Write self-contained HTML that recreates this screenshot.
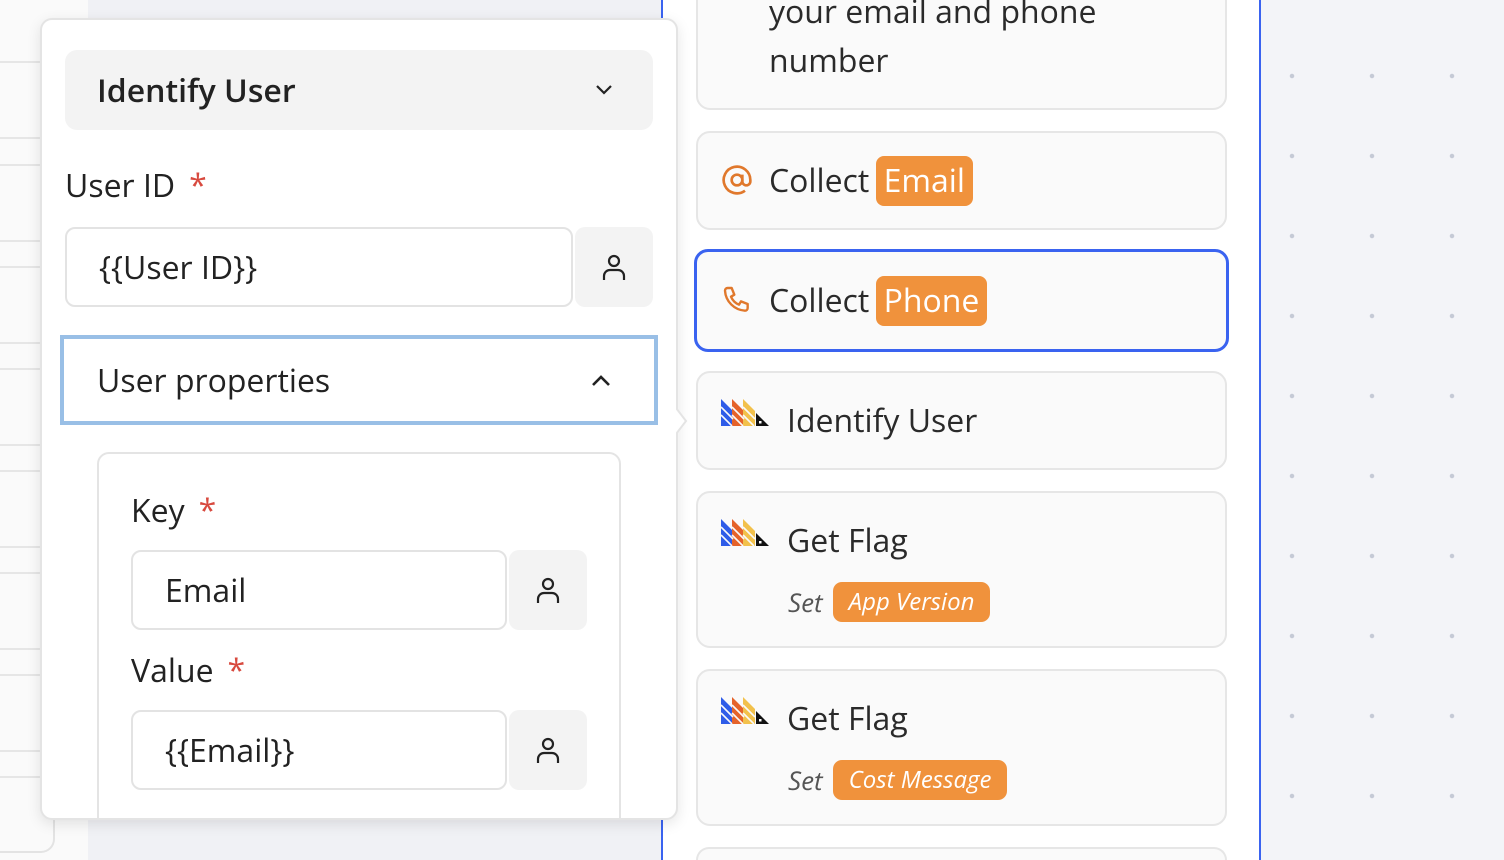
<!DOCTYPE html>
<html style="overflow:hidden;width:1504px;height:860px"><head><meta charset="utf-8"><style>
*{box-sizing:border-box;margin:0;padding:0}
body{width:1504px;height:860px;position:relative;overflow:hidden;background:#fff;font-family:"Open Sans","Liberation Sans",sans-serif;color:#222}
.abs{position:absolute}
.line{position:absolute;left:0;width:88px;height:2px;background:#e6e6e6}
.card{position:absolute;left:696px;width:531px;background:#fafafa;border:2px solid #e6e6e6;border-radius:14px}
.t{position:absolute;font-size:32px;color:#2a2a2a;white-space:nowrap}
.tag{display:inline-block;background:#f0923c;color:#fff;border-radius:8px;padding:0 8px;line-height:50px}
.inp{position:absolute;background:#fff;border:2px solid #e3e3e3;border-radius:10px;font-size:32px;color:#222;padding-left:32px;display:flex;align-items:center}
.btn{position:absolute;background:#f3f3f3;border-radius:10px;display:flex;align-items:center;justify-content:center}
.lbl{position:absolute;font-size:32px;color:#222}
.req{color:#d84a3f;margin-left:14px}
.set{position:absolute;font-size:26px;font-style:italic;color:#555;white-space:nowrap}
.set span{display:inline-block;background:#f0923c;color:#fff;border-radius:9px;padding:0 16px;line-height:40px;margin-left:10px;font-size:24px;vertical-align:top}
</style></head><body>
<div class="abs" style="left:0;top:0;width:88px;height:860px;background:#fafafa"></div>
<div class="line" style="top:61px"></div><div class="line" style="top:137px"></div><div class="line" style="top:164px"></div>
<div class="line" style="top:240px"></div><div class="line" style="top:266px"></div><div class="line" style="top:342px"></div>
<div class="line" style="top:368px"></div><div class="line" style="top:444px"></div><div class="line" style="top:470px"></div>
<div class="line" style="top:546px"></div><div class="line" style="top:572px"></div><div class="line" style="top:648px"></div>
<div class="line" style="top:674px"></div><div class="line" style="top:750px"></div><div class="line" style="top:776px"></div>
<div class="abs" style="left:-20px;top:776px;width:75px;height:77px;border:2px solid #e3e3e3;border-radius:0 0 14px 0;border-top:none;border-left:none"></div>
<div class="abs" style="left:88px;top:0;width:574px;height:860px;background:#f0f1f5"></div>
<div class="abs" style="left:661px;top:0;width:2px;height:860px;background:#3a63f0"></div>
<div class="abs" style="left:1259px;top:0;width:245px;height:860px;background:#f3f4f8;background-image:radial-gradient(circle,#c5cad6 2px,transparent 2.5px);background-size:80px 80px;background-position:-7px 36px"></div>
<div class="abs" style="left:1259px;top:0;width:2px;height:860px;background:#3a63f0"></div>

<div class="card" style="top:-20px;height:130px"></div>
<div class="t" style="left:769px;top:-10px;line-height:44px">your email and phone</div>
<div class="t" style="left:769px;top:39px;line-height:44px">number</div>

<div class="card" style="top:131px;height:99px"></div>
<svg class="abs" style="left:721px;top:164px" width="32" height="32" viewBox="0 0 24 24" fill="none" stroke="#e0782c" stroke-width="2"><circle cx="12" cy="12" r="4"/><path d="M16 8v5a3 3 0 0 0 6 0v-1a10 10 0 1 0-4 8"/></svg>
<div class="t" style="left:769px;top:156px;line-height:50px">Collect <span class="tag" style="margin-left:-2px">Email</span></div>

<div class="card" style="top:249px;height:103px;left:694px;width:535px;border:3px solid #3a63f0"></div>
<svg class="abs" style="left:721px;top:284px" width="32" height="32" viewBox="0 0 24 24" fill="none" stroke="#e0782c" stroke-width="1.8" stroke-linejoin="round"><path d="M5 3h3l2 5-2.5 1.5a11 11 0 0 0 6 6L15 13l5 2v3a2 2 0 0 1-2 2A16 16 0 0 1 3 5a2 2 0 0 1 2-2"/></svg>
<div class="t" style="left:769px;top:276px;line-height:50px">Collect <span class="tag" style="margin-left:-2px">Phone</span></div>

<svg width="0" height="0" style="position:absolute"><defs>
<g id="ph">
<polygon points="0,0 12,12 12,27 0,27" fill="#2f5ce8"/>
<polygon points="11,0 23,12 23,27 11,27" fill="#e5632a"/>
<polygon points="22,0 34,12 34,27 22,27" fill="#f2c14c"/>
<g stroke="#fafafa" stroke-width="1.6"><path d="M0 8L12 20M0 16L11 27M11 8L23 20M11 16L22 27M22 8L34 20M22 16L33 27"/></g>
<polygon points="35,14 48,27 35,27" fill="#111"/><rect x="38" y="22" width="2.5" height="2.5" fill="#fff"/>
</g></defs></svg>

<div class="card" style="top:371px;height:99px"></div>
<svg class="abs" style="left:721px;top:399px" width="48" height="27"><use href="#ph"/></svg>
<div class="t" style="left:787px;top:396px;line-height:50px">Identify User</div>

<div class="card" style="top:491px;height:157px"></div>
<svg class="abs" style="left:721px;top:519px" width="48" height="27"><use href="#ph"/></svg>
<div class="t" style="left:787px;top:516px;line-height:50px">Get Flag</div>
<div class="set" style="left:788px;top:582px;line-height:40px">Set<span>App Version</span></div>

<div class="card" style="top:669px;height:157px"></div>
<svg class="abs" style="left:721px;top:697px" width="48" height="27"><use href="#ph"/></svg>
<div class="t" style="left:787px;top:694px;line-height:50px">Get Flag</div>
<div class="set" style="left:788px;top:760px;line-height:40px">Set<span>Cost Message</span></div>

<div class="card" style="top:847px;height:13px;border-bottom:none;border-radius:14px 14px 0 0"></div>

<div class="abs" style="left:40px;top:18px;width:638px;height:802px;background:#fff;border:2px solid #e4e4e4;border-radius:12px;box-shadow:0 4px 14px rgba(0,0,0,.10);overflow:hidden">
  <div class="abs" style="left:23px;top:30px;width:588px;height:80px;background:#f3f3f3;border-radius:12px"></div>
  <div class="abs" style="left:55px;top:48px;font-size:32px;font-weight:600;color:#222;line-height:46px">Identify User</div>
  <svg class="abs" style="left:552px;top:62px" width="20" height="14" viewBox="0 0 20 14" fill="none" stroke="#222" stroke-width="2.2"><path d="M3 4l7 7 7-7"/></svg>

  <div class="lbl" style="left:23px;top:143px;line-height:46px">User ID<span class="req">*</span></div>
  <div class="inp" style="left:23px;top:207px;width:508px;height:80px">{{User ID}}</div>
  <div class="btn" style="left:533px;top:207px;width:78px;height:80px">
    <svg width="28" height="30" viewBox="0 0 28 30" fill="none" stroke="#222" stroke-width="2.2"><circle cx="14" cy="9" r="5"/><path d="M4 28v-4a6 6 0 0 1 6-6h8a6 6 0 0 1 6 6v4"/></svg></div>

  <div class="abs" style="left:18px;top:315px;width:598px;height:90px;border:4px solid #99bfe6;background:#fff"></div>
  <div class="abs" style="left:55px;top:338px;font-size:32px;color:#222;line-height:46px">User properties</div>
  <svg class="abs" style="left:547px;top:352px" width="24" height="16" viewBox="0 0 24 16" fill="none" stroke="#222" stroke-width="2.6"><path d="M4 13l8-8 8 8"/></svg>

  <div class="abs" style="left:55px;top:432px;width:524px;height:420px;border:2px solid #e4e4e4;border-radius:12px"></div>
  <div class="lbl" style="left:89px;top:468px;line-height:46px">Key<span class="req">*</span></div>
  <div class="inp" style="left:89px;top:530px;width:376px;height:80px">Email</div>
  <div class="btn" style="left:467px;top:530px;width:78px;height:80px">
    <svg width="28" height="30" viewBox="0 0 28 30" fill="none" stroke="#222" stroke-width="2.2"><circle cx="14" cy="9" r="5"/><path d="M4 28v-4a6 6 0 0 1 6-6h8a6 6 0 0 1 6 6v4"/></svg></div>
  <div class="lbl" style="left:89px;top:628px;line-height:46px">Value<span class="req">*</span></div>
  <div class="inp" style="left:89px;top:690px;width:376px;height:80px">{{Email}}</div>
  <div class="btn" style="left:467px;top:690px;width:78px;height:80px">
    <svg width="28" height="30" viewBox="0 0 28 30" fill="none" stroke="#222" stroke-width="2.2"><circle cx="14" cy="9" r="5"/><path d="M4 28v-4a6 6 0 0 1 6-6h8a6 6 0 0 1 6 6v4"/></svg></div>
</div>
<svg class="abs" style="left:676px;top:408px" width="14" height="26"><path d="M0 0l10 13-10 13" fill="#fff" stroke="#e4e4e4" stroke-width="2"/></svg>
</body></html>
